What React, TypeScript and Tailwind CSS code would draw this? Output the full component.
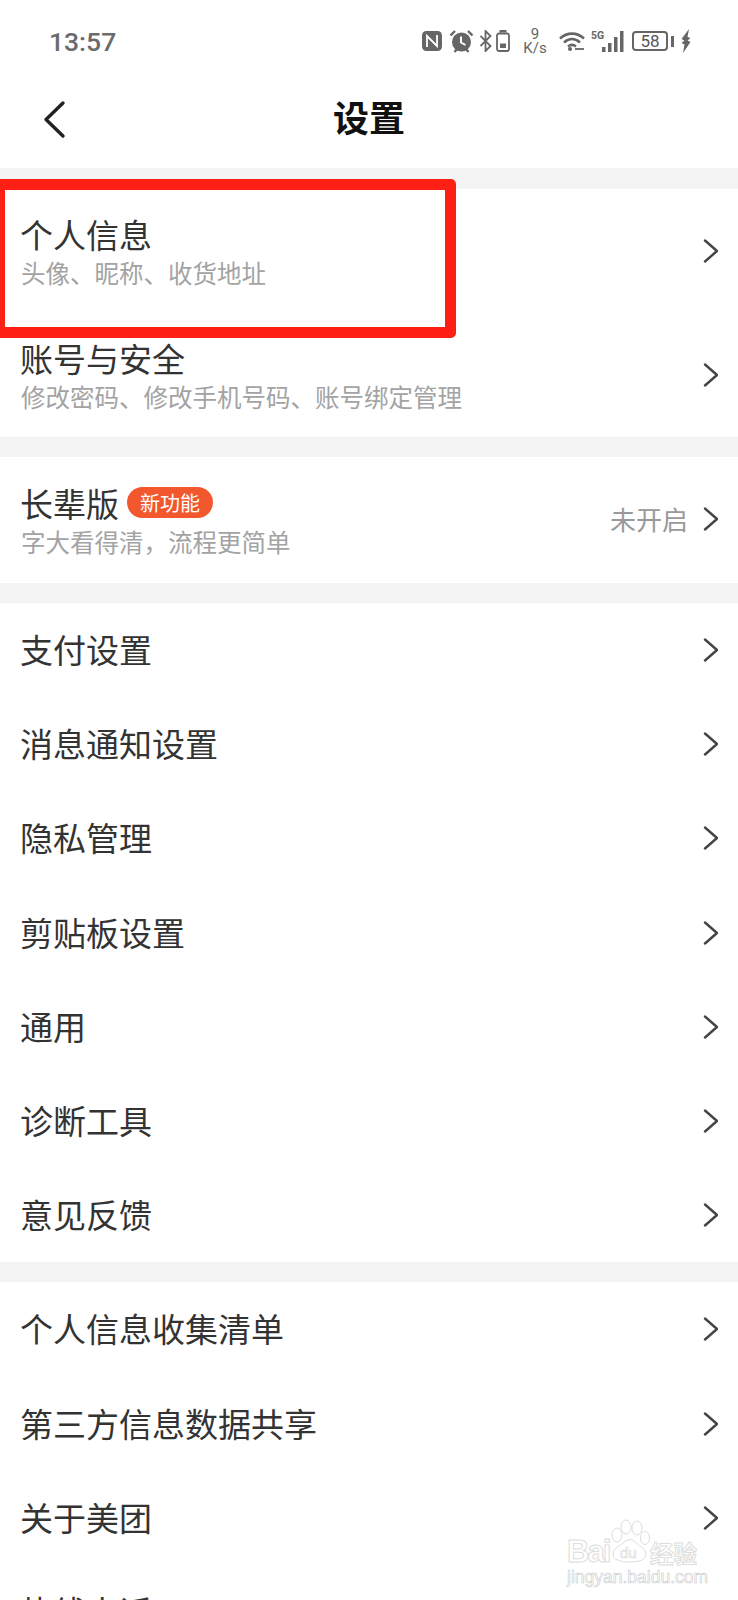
import React from "react";

const CJK = "font-['Noto_Sans_CJK_SC','Noto_Sans',sans-serif]";

const Chevron = () => (
  <svg width="15" height="24" viewBox="0 0 15 24" fill="none" className="shrink-0">
    <path d="M2 1.500 L14 12 L2 22.500" stroke="#444" strokeWidth="2.400" strokeLinecap="round" strokeLinejoin="round" />
  </svg>
);

const StatusIcons = () => (
  <div className="flex items-center text-[#666]">
    {/* nfc */}
    <svg width="20" height="20" viewBox="0 0 20 20" className="mr-[8px]">
      <rect x="0" y="0" width="20" height="20" rx="4.500" fill="#666" />
      <path d="M5 16V5l10 10V4" fill="none" stroke="#fff" strokeWidth="1.800" />
    </svg>
    {/* alarm */}
    <svg width="23" height="23" viewBox="0 0 23 23" className="mr-[7px]">
      <circle cx="11.500" cy="12" r="9.500" fill="#666" />
      <path d="M0.500 5.500l4.500-4.500M22.500 5.500l-4.500-4.500M4.500 22l2.500-3M18.500 22l-2.500-3" stroke="#666" strokeWidth="2.400" />
      <path d="M11 6.500v6l4.500 2.500" fill="none" stroke="#fff" strokeWidth="2" />
    </svg>
    {/* bluetooth */}
    <svg width="12" height="22" viewBox="0 0 12 22" className="mr-[4px]">
      <path d="M0.500 6l10 10-5 5V1l5 5-10 10" fill="none" stroke="#666" strokeWidth="1.800" />
    </svg>
    {/* small battery */}
    <svg width="14" height="22" viewBox="0 0 14 22" className="mr-[12px]">
      <rect x="3.500" y="0" width="7" height="2.500" fill="#666" />
      <rect x="1" y="3.500" width="12" height="17.500" rx="2" fill="none" stroke="#666" strokeWidth="1.800" />
      <rect x="4" y="13.500" width="6" height="4.500" fill="#666" />
    </svg>
    {/* network speed */}
    <div className="mr-[11px] flex w-[26px] flex-col items-center font-['Roboto',sans-serif] text-[15px] leading-[14px] text-[#666]">
      <span>9</span>
      <span>K/s</span>
    </div>
    {/* wifi */}
    <svg width="26" height="20" viewBox="0 0 26 20" className="mr-[6px]">
      <path d="M1 7.500c7-6.500 17-6.500 24 0M5 11.500c5-4.500 11-4.500 16 0M9 15.500c2.500-2 5.500-2 8 0" fill="none" stroke="#666" strokeWidth="2.600" />
      <circle cx="11" cy="18" r="2" fill="#666" />
      <path d="M16 18h9" stroke="#666" strokeWidth="1.800" />
    </svg>
    <div className="relative mr-[8px] flex h-[22px] w-[33px] items-end justify-end">
      <span className="absolute left-0 top-[1px] font-['Roboto',sans-serif] text-[10.500px] font-bold leading-[10px] text-[#666]">5G</span>
      {/* signal bars */}
      <svg width="22" height="21" viewBox="0 0 22 21">
        <rect x="0" y="16" width="3.500" height="5" fill="#666" />
        <rect x="6" y="12" width="3.500" height="9" fill="#666" />
        <rect x="12" y="6" width="3.500" height="15" fill="#666" />
        <rect x="18" y="0" width="3.500" height="21" fill="#666" />
      </svg>
    </div>
    {/* battery */}
    <div className="mr-[3px] flex h-[20px] w-[36px] items-center justify-center rounded-[4px] border-2 border-[#666] font-['Roboto',sans-serif] text-[17px] leading-none text-[#555]">
      58
    </div>
    <div className="mr-[7px] h-[11px] w-[3px] bg-[#666]" />
    {/* charging bolt */}
    <svg width="10" height="24" viewBox="0 0 10 24">
      <path d="M8 0L0.500 10l3 1.500L0.500 14l3 1.500L2 24l7.500-11-3-1.500L9.500 9l-3-1z" fill="#666" />
    </svg>
  </div>
);

type RowProps = {
  title: string;
  sub?: string;
  badge?: string;
  right?: string;
  height: string;
};

const Row = ({ title, sub, badge, right, height }: RowProps) => (
  <div className={`flex items-center justify-between pl-[20px] pr-[20px] ${height}`}>
    <div className={sub ? "mt-[3px]" : "mb-[2px]"}>
      <div className="flex items-center">
        <span className="text-[33px] leading-[40px] text-[#333]">{title}</span>
        {badge && (
          <span className="ml-[8px] flex h-[31px] w-[86px] items-center justify-center rounded-full bg-[#f2572d] text-[20px] text-white">
            {badge}
          </span>
        )}
      </div>
      {sub && <div className="pl-[1px] text-[24.500px] leading-[38px] text-[#a3a3a3]">{sub}</div>}
    </div>
    <div className={`flex items-center gap-[15px] ${right ? "mb-[3px]" : ""}`}>
      {right && <span className="text-[26px] text-[#999]">{right}</span>}
      <Chevron />
    </div>
  </div>
);

const Gap = () => <div className="h-[20px] bg-[#f4f4f4]" />;

const SimpleRows = ({ items }: { items: string[] }) => (
  <>
    {items.map((t) => (
      <Row key={t} title={t} height="h-[94.200px]" />
    ))}
  </>
);

// paw and outlined wordmark in the corner
const Watermark = () => (
  <div className="pointer-events-none absolute left-[566px] top-[1518px] h-[68px] w-[134px]">
    <svg width="42" height="46" viewBox="0 0 42 46" className="absolute left-[42px] top-0" fill="none" stroke="#ddd" strokeWidth="1">
      <ellipse cx="9" cy="17" rx="5" ry="7" />
      <ellipse cx="18" cy="9" rx="5" ry="7" />
      <ellipse cx="29" cy="10" rx="5" ry="7" />
      <ellipse cx="37" cy="20" rx="4.500" ry="6.500" />
      <path d="M5 36c0-6 7-8 11-12 4-3 8-3 11 0 4 4 11 6 11 12 0 6-7 8-16 8S5 42 5 36z" />
    </svg>
    <span className="absolute left-[1px] top-[19px] font-['Liberation_Sans',sans-serif] text-[31px] font-bold leading-[30px] tracking-[-2px] text-transparent [-webkit-text-stroke:1px_#ddd]">
      Bai
    </span>
    <span className="absolute left-[54px] top-[26px] font-['Liberation_Sans',sans-serif] text-[15px] leading-[18px] text-transparent [-webkit-text-stroke:0.7px_#ddd]">
      du
    </span>
    <span className={`absolute left-[84px] top-[20px] text-[23.500px] font-bold leading-[30px] text-transparent [-webkit-text-stroke:1px_#ddd] ${CJK}`}>
      经验
    </span>
    <span className="absolute left-[1px] top-[50px] font-['Liberation_Sans',sans-serif] text-[17.500px] leading-[18px] text-transparent [-webkit-text-stroke:0.6px_#ccc]">
      jingyan.baidu.com
    </span>
  </div>
);

export default function App() {
  return (
    <div className={`relative h-[1600px] w-[738px] overflow-hidden bg-white ${CJK}`}>
      {/* status bar */}
      <div className="flex h-[82px] items-center justify-between pl-[49px] pr-[47px]">
        <span className="mt-[2px] font-['Roboto',sans-serif] text-[26.500px] font-medium text-[#6b6b6b]">13:57</span>
        <StatusIcons />
      </div>

      {/* title bar */}
      <div className="relative flex h-[86px] items-center justify-center">
        <svg width="24" height="40" viewBox="0 0 24 40" className="absolute left-[42px] top-[18px]" fill="none">
          <path d="M21 3 L4 19.500 L21 36" stroke="#222" strokeWidth="3.400" strokeLinecap="round" strokeLinejoin="round" />
        </svg>
        <span className="mb-[18px] text-[36px] font-bold leading-none text-[#111]">设置</span>
      </div>

      <div className="h-[21px] bg-[#f4f4f4]" />
      <Row title="个人信息" sub="头像、昵称、收货地址" height="h-[124px]" />
      <Row title="账号与安全" sub="修改密码、修改手机号码、账号绑定管理" height="h-[124px]" />
      <Gap />
      <Row title="长辈版" badge="新功能" sub="字大看得清，流程更简单" right="未开启" height="h-[126px]" />
      <Gap />
      <SimpleRows items={["支付设置", "消息通知设置", "隐私管理", "剪贴板设置", "通用", "诊断工具", "意见反馈"]} />
      <Gap />
      <SimpleRows items={["个人信息收集清单", "第三方信息数据共享", "关于美团", "热线电话"]} />

      {/* highlight frame over the first row */}
      <div className="absolute left-[-6px] top-[179px] h-[159px] w-[462px] rounded-[5px] border-[11px] border-[#fe2015]" />
      <Watermark />
    </div>
  );
}
